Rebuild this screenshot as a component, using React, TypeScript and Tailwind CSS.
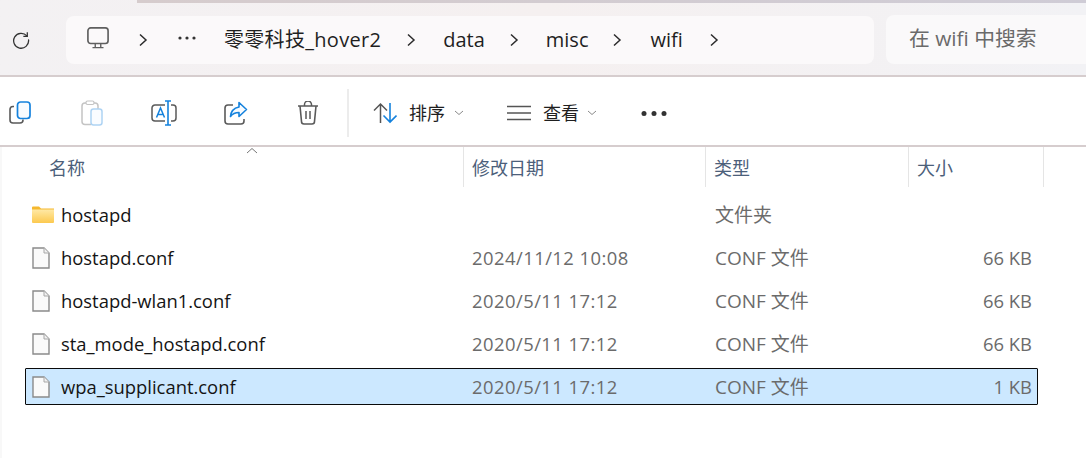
const FONT = "font-['Open_Sans','Noto_Sans_CJK_SC',sans-serif]";

function Chevron({ className = "" }: { className?: string }) {
  return (
    <svg width="10" height="14" viewBox="0 0 10 14" fill="none" className={className}>
      <path d="M2 1.500l6 5.500-6 5.500" stroke="#2b2b2b" strokeWidth="1.500" />
    </svg>
  );
}

function Small({ className = "" }: { className?: string }) {
  return (
    <svg width="10" height="6" viewBox="0 0 10 6" fill="none" className={className}>
      <path d="M1 1l4 3.500L9 1" stroke="#8a8a8a" strokeWidth="1" />
    </svg>
  );
}

function FileIcon() {
  return (
    <svg width="18" height="22" viewBox="0 0 18 22" fill="none">
      <path d="M1 1h11l5 5v15H1z" fill="#fafafa" stroke="#8a8a8a" strokeWidth="1.400" />
      <path d="M12 1v5h5" fill="#f0f0f0" stroke="#a8a8a8" strokeWidth="1" />
    </svg>
  );
}

function FolderIcon() {
  return (
    <svg width="22" height="18" viewBox="0 0 22 18" fill="none">
      <defs>
        <linearGradient id="fold" x1="0" y1="0" x2="0" y2="1">
          <stop offset="0" stopColor="#ffe9a6" />
          <stop offset="1" stopColor="#fcc94f" />
        </linearGradient>
      </defs>
      <path d="M0 1.500Q0 .5 1 .5h6l2 2h13v3H0z" fill="#f5b82e" />
      <path d="M0 3.500h22V16q0 1-1 1H1q-1 0-1-1z" fill="url(#fold)" />
    </svg>
  );
}

function ToolButton({ children }: { children: React.ReactNode }) {
  return <div className="w-[40px] h-[40px] flex items-center justify-center">{children}</div>;
}

const rows = [
  { name: "hostapd.conf", date: "2024/11/12 10:08", type: "CONF 文件", size: "66 KB" },
  { name: "hostapd-wlan1.conf", date: "2020/5/11 17:12", type: "CONF 文件", size: "66 KB" },
  { name: "sta_mode_hostapd.conf", date: "2020/5/11 17:12", type: "CONF 文件", size: "66 KB" },
  { name: "wpa_supplicant.conf", date: "2020/5/11 17:12", type: "CONF 文件", size: "1 KB", selected: true },
];

function Row({ icon, name, date, type, size, selected }: { icon: React.ReactNode; name: string; date?: string; type: string; size?: string; selected?: boolean }) {
  return (
    <div className="h-[43px] flex items-center pl-[25px]">
      <div className={`w-[1013px] h-[37px] grid grid-cols-[446px_243px_1fr] items-center rounded-[1px] border ${selected ? "bg-[#cce8ff] border-[#0a0a0a]" : "border-transparent"}`}>
        <div className="flex items-center h-full">
          <div className="w-[35px] pl-[6px] flex justify-start items-center">{icon}</div>
          <span className="text-[#141414] text-[18.400px] whitespace-nowrap">{name}</span>
        </div>
        <span className="text-[#6b6b6b] text-[18.400px] tracking-[0.47px] whitespace-nowrap">{date}</span>
        <div className="flex justify-between pt-[2px] pr-[5px] text-[#6b6b6b] text-[19px]">
          <span>{type}</span>
          <span className="text-[18.400px]">{size}</span>
        </div>
      </div>
    </div>
  );
}

function Head({ label, w }: { label: string; w: string }) {
  return (
    <div className={`${w} h-full border-r border-[#e5e5e5] pl-[8px] pt-[2px] flex items-center text-[#4c607a] text-[18px] leading-none`}>
      {label}
    </div>
  );
}

export default function App() {
  return (
    <div className={`w-[1086px] h-[458px] overflow-hidden bg-white ${FONT}`}>
      <div className="h-[77px] border-b-2 border-[#d6cdce] bg-gradient-to-r from-[#f3f1f3] via-[#f5f0f0] to-[#f2f2f5] flex flex-col">
        <div className="h-[3px] ml-[137px] bg-gradient-to-r from-[#d6cccd] to-[#cfccd6]" />
        <div className="flex items-center h-[72px]">
          <div className="w-[66px] flex justify-center mt-[1px] -translate-x-[12px]">
            <svg width="18" height="18" viewBox="0 0 20 20" fill="none">
              <path d="M16.500 5.500A8.300 8.300 0 1 0 18.400 10" stroke="#333" strokeWidth="1.400" strokeLinecap="round" />
              <path d="M17 1.500v4.400h-4.400" stroke="#333" strokeWidth="1.400" />
            </svg>
          </div>
          <div className="w-[808px] h-[48px] mt-[1px] rounded-[8px] bg-[#fbf9fa] flex items-center pl-[21px] text-[#1f1f1f] text-[20px]">
            <svg width="22" height="22" viewBox="0 0 24 24" fill="none" className="-mt-[4px]">
              <rect x="1" y="1" width="22" height="17" rx="3" stroke="#5f5f5f" strokeWidth="1.800" />
              <path d="M9 18v4M15 18v4M6 22.500h12" stroke="#5f5f5f" strokeWidth="1.500" />
            </svg>
            <Chevron className="ml-[29px]" />
            <svg width="18" height="4" viewBox="0 0 18 4" className="ml-[30px] -mt-[4px]">
              <circle cx="2" cy="2" r="1.600" fill="#333" />
              <circle cx="9" cy="2" r="1.600" fill="#333" />
              <circle cx="16" cy="2" r="1.600" fill="#333" />
            </svg>
            <span className="ml-[28px] whitespace-nowrap tracking-[0.3px]">零零科技_hover2</span>
            <Chevron className="ml-[25px]" />
            <span className="ml-[27px]">data</span>
            <Chevron className="ml-[24px]" />
            <span className="ml-[27px]">misc</span>
            <Chevron className="ml-[24px]" />
            <span className="ml-[28px]">wifi</span>
            <Chevron className="ml-[26px]" />
          </div>
          <div className="ml-[12px] w-[200px] h-[49px] rounded-l-[8px] bg-[#faf9fa] pl-[23px] flex items-center text-[#6a6a6a] text-[20.800px] whitespace-nowrap">
            在 wifi 中搜索
          </div>
        </div>
      </div>

      <div className="h-[70px] pt-[4px] border-b-2 border-[#d6cdce] flex items-center gap-[32px]">
        <ToolButton>
          <svg width="22" height="24" viewBox="0 0 22 24" fill="none">
            <path d="M5 5.500H4a3 3 0 0 0-3 3V19a3 3 0 0 0 3 3h7a3 3 0 0 0 3-3v-.5" stroke="#5a5a5a" strokeWidth="1.600" />
            <rect x="8.500" y="1" width="12.500" height="16.500" rx="3" fill="#f7fbff" stroke="#1582dd" strokeWidth="1.700" />
          </svg>
        </ToolButton>
        <ToolButton>
          <svg width="22" height="26" viewBox="0 0 22 26" fill="none">
            <path d="M10 24.500H4a3 3 0 0 1-3-3V6a3 3 0 0 1 3-3h10a3 3 0 0 1 3 3v3" stroke="#c4c4c4" strokeWidth="1.500" />
            <rect x="5" y="1" width="8" height="3.500" rx="1.500" fill="#fff" stroke="#c4c4c4" strokeWidth="1.200" />
            <rect x="10" y="9" width="11" height="16" rx="2.500" fill="#fafcff" stroke="#aed3f3" strokeWidth="1.500" />
          </svg>
        </ToolButton>
        <ToolButton>
          <svg width="26" height="26" viewBox="0 0 26 26" fill="none">
            <path d="M14 5H4a3 3 0 0 0-3 3v10a3 3 0 0 0 3 3h10M20 5h2a3 3 0 0 1 3 3v10a3 3 0 0 1-3 3h-2" stroke="#5a5a5a" strokeWidth="1.500" />
            <path d="M14 1h6M17 1v24M14 25h6" stroke="#1582dd" strokeWidth="1.600" />
            <path d="M5.500 17.500L9.500 8l4 9.500M7 14.500h5" stroke="#1582dd" strokeWidth="1.500" />
          </svg>
        </ToolButton>
        <ToolButton>
          <svg width="24" height="24" viewBox="0 0 24 24" fill="none">
            <path d="M9 4H4a3 3 0 0 0-3 3v13a3 3 0 0 0 3 3h13a3 3 0 0 0 3-3v-2" stroke="#5a5a5a" strokeWidth="1.600" />
            <path d="M15 1.500l7.500 7-7.500 7v-4c-4 0-6.500 1.200-8.500 4 .4-5.500 3.500-8.500 8.500-9.500z" fill="#f7fbff" stroke="#1582dd" strokeWidth="1.600" strokeLinejoin="round" />
          </svg>
        </ToolButton>
        <ToolButton>
          <svg width="22" height="24" viewBox="0 0 22 24" fill="none">
            <path d="M1 5h20M7.500 5V3.500a2.500 2.500 0 0 1 7 0V5" stroke="#5a5a5a" strokeWidth="1.500" />
            <path d="M3 5l1.500 15.500a2.500 2.500 0 0 0 2.500 2.500h8a2.500 2.500 0 0 0 2.500-2.500L19 5" stroke="#5a5a5a" strokeWidth="1.600" />
            <path d="M9 10v8M13 10v8" stroke="#5a5a5a" strokeWidth="1.500" />
          </svg>
        </ToolButton>
        <div className="-ml-[13px] w-[2px] h-[48px] bg-[#ececec]" />
        <div className="flex items-center -ml-[8px] text-[#1f1f1f] text-[18px]">
          <svg width="24" height="22" viewBox="0 0 24 22" fill="none">
            <path d="M7.500 21V2M1 8.500l6.500-6.500L14 8.500" stroke="#555" strokeWidth="1.500" />
            <path d="M17 1v19M10.500 13.500L17 20l6.500-6.500" stroke="#1582dd" strokeWidth="1.600" />
          </svg>
          <span className="ml-[12px]">排序</span>
          <Small className="ml-[9px]" />
          <svg width="24" height="16" viewBox="0 0 24 16" fill="none" className="ml-[43px]">
            <path d="M0 1.500h24M0 8h24M0 14.500h24" stroke="#555" strokeWidth="1.500" />
          </svg>
          <span className="ml-[12px]">查看</span>
          <Small className="ml-[8px]" />
          <svg width="26" height="5" viewBox="0 0 26 5" className="ml-[44px]">
            <circle cx="3" cy="2.500" r="2.500" fill="#333" />
            <circle cx="13" cy="2.500" r="2.500" fill="#333" />
            <circle cx="23" cy="2.500" r="2.500" fill="#333" />
          </svg>
        </div>
      </div>

      <div className="h-[311px] shadow-[inset_2px_0_0_#f8f8f8]">
        <div className="relative h-[40px] flex">
          <div className="w-[464px] h-full border-r border-[#e5e5e5] pl-[49px] pt-[2px] flex items-center text-[#4c607a] text-[18px] leading-none">名称</div>
          <Head label="修改日期" w="w-[242px]" />
          <Head label="类型" w="w-[203px]" />
          <Head label="大小" w="w-[135px]" />
          <svg width="12" height="7" viewBox="0 0 12 7" fill="none" className="absolute left-[246px] top-0">
            <path d="M1 6l5-4.500L11 6" stroke="#777" strokeWidth="1" />
          </svg>
        </div>

        <div className="pt-[6px]">
          <div className="h-[43px] flex items-center pl-[25px]">
            <div className="w-[1013px] h-[37px] grid grid-cols-[446px_243px_1fr] items-center border border-transparent">
              <div className="flex items-center h-full">
                <div className="w-[35px] pl-[6px]"><FolderIcon /></div>
                <span className="text-[#141414] text-[18.400px]">hostapd</span>
              </div>
              <span />
              <span className="pt-[2px] text-[#6b6b6b] text-[19px]">文件夹</span>
            </div>
          </div>
          {rows.map((r) => (
            <Row key={r.name} icon={<FileIcon />} {...r} />
          ))}
        </div>
      </div>
    </div>
  );
}
